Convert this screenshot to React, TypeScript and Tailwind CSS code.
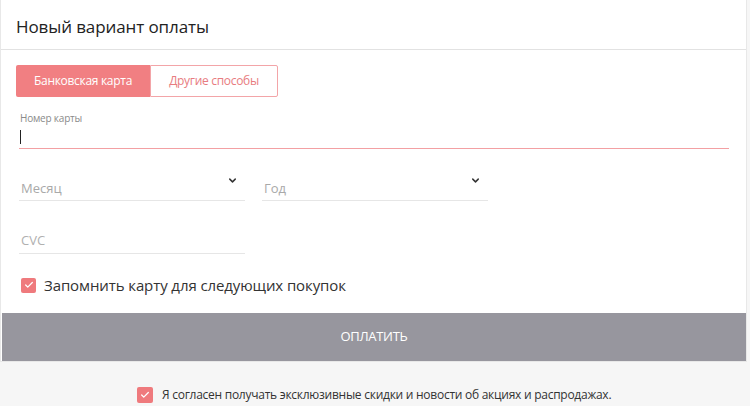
import { ChevronDown, Check } from "lucide-react";

function SelectField({ label }: { label: string }) {
  return (
    <div className="relative flex h-[28px] w-[226px] items-end border-b border-[#e6e6e6] pb-[5px]">
      <span className="pl-[2px] text-[13px] leading-none text-[#a9a9a9]">{label}</span>
      <ChevronDown className="absolute right-[7px] top-[2px] h-[11px] w-[11px] text-[#333]" strokeWidth={3.2} />
    </div>
  );
}

function CheckBox({ size = 15 }: { size?: number }) {
  return (
    <span
      className="flex items-center justify-center rounded-[2px] bg-[#ef7a7d]"
      style={{ width: size, height: size }}
    >
      <Check className="h-[10px] w-[10px] text-white" strokeWidth={3} />
    </span>
  );
}

export default function App() {
  return (
    <div
      className="h-[406px] w-[750px] overflow-hidden bg-[#f6f6f6]"
      style={{ fontFamily: '"Open Sans", "Noto Sans", sans-serif' }}
    >
      <div className="w-[747px] border-x border-b border-[#e8e8e8] bg-white">
        <div className="flex h-[50px] items-center border-b border-[#e2e2e2] pl-[15px] pt-[4px]">
          <h1 className="text-[17px] font-normal tracking-[-0.1px] text-[#222]">Новый вариант оплаты</h1>
        </div>

        <div className="px-[15px] pt-[15px]">
          <div className="flex h-[32px] w-[262px]">
            <button className="flex w-[134px] items-center justify-center rounded-l-[2px] bg-[#f17f82] text-[12px] tracking-[-0.3px] text-white">
              Банковская карта
            </button>
            <button className="flex flex-1 items-center justify-center rounded-r-[2px] border border-[#f3a5a8] text-[12px] tracking-[-0.3px] text-[#e87c80]">
              Другие способы
            </button>
          </div>

          <div className="mt-[15px] w-[713px] pl-[4px]">
            <div className="text-[10px] leading-[12px] tracking-[-0.2px] text-[#8a8a8a]">Номер карты</div>
            <div className="mt-[6px] h-[14px] w-px bg-[#222]" />
          </div>
          <div className="ml-[3px] mt-[4px] h-px w-[710px] bg-[#f3a0a3]" />

          <div className="mt-[24px] flex gap-[17px] pl-[3px]">
            <SelectField label="Месяц" />
            <SelectField label="Год" />
          </div>

          <div className="ml-[3px] mt-[25px] flex h-[28px] w-[226px] items-end border-b border-[#e6e6e6] pb-[6px] pl-[2px]">
            <span className="text-[13px] leading-none text-[#b0b0b0]">CVC</span>
          </div>

          <label className="mt-[20px] flex items-center gap-[8px] pl-[5px]">
            <CheckBox />
            <span className="text-[15px] tracking-[-0.1px] text-[#333]">Запомнить карту для следующих покупок</span>
          </label>
        </div>

        <button className="mx-px mt-[16px] flex h-[48px] w-[744px] items-center justify-center bg-[#97969e] text-[13px] tracking-[-0.3px] text-white">
          ОПЛАТИТЬ
        </button>
      </div>

      <div className="mt-[24px] flex items-center gap-[9px] pl-[137px]">
        <CheckBox size={16} />
        <span className="text-[12px] tracking-[-0.26px] text-[#333]">
          Я согласен получать эксклюзивные скидки и новости об акциях и распродажах.
        </span>
      </div>
    </div>
  );
}
